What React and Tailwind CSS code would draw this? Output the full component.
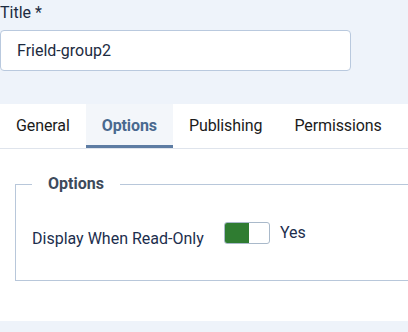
const tabs = ["General", "Options", "Publishing", "Permissions"];

function App() {
  return (
    <div className="h-[332px] w-[408px] overflow-hidden bg-[#eef3fa] font-['Roboto',sans-serif]">
      <label className="block h-[30px] pt-[1px] text-[16px] leading-[24px] text-[#1c2b41]">Title *</label>
      <div className="flex h-[41px] w-[351px] items-center rounded-[4px] border border-[#b9c9de] bg-white px-4 text-[16px] text-[#1c2b41]">
        Frield-group2
      </div>

      <div className="mt-[33px] h-[217px] bg-white">
        <div className="flex h-[45px] border-b border-[#dfe4ec]">
          {tabs.map((tab) => (
            <div
              key={tab}
              className={`flex items-center px-4 text-[16px] tracking-[-0.1px] ${
                tab === "Options"
                  ? "border-b-[3px] border-[#5d7ca3] bg-[#f3f6fa] pt-[3px] font-bold text-[#49698f]"
                  : "text-[#1b1b1b]"
              }`}
            >
              {tab}
            </div>
          ))}
        </div>

        <div className="pl-[15px] pt-[23px]">
          <fieldset className="h-[109px] w-[420px] border border-[#b8c7da] pl-4">
            <legend className="px-4 text-[16px] font-bold leading-[24px] text-[#3d4a5b]">Options</legend>
            <div className="mt-[24px] flex items-start">
              <span className="mt-[7px] w-[192px] text-[16px] leading-[24px] text-[#1c2e4d]">
                Display When Read-Only
              </span>
              <div className="mt-[2px] flex h-[22px] w-[46px] overflow-hidden rounded-[3px] border border-[#a9b9ca] bg-white">
                <div className="h-full w-[24px] bg-[#2f7c31]" />
              </div>
              <span className="ml-[10px] mt-[1px] text-[16px] leading-[24px] text-[#1c2e4d]">Yes</span>
            </div>
          </fieldset>
        </div>
      </div>
    </div>
  );
}

export default App;
